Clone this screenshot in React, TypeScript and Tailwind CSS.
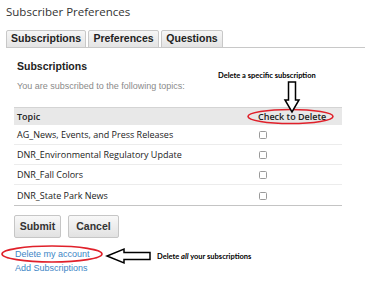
import React from "react";

const topics = [
  "AG_News, Events, and Press Releases",
  "DNR_Environmental Regulatory Update",
  "DNR_Fall Colors",
  "DNR_State Park News",
];

const tabs = [
  { label: "Subscriptions", w: "w-[80px]" },
  { label: "Preferences", w: "w-[71px]" },
  { label: "Questions", w: "w-[62px]" },
];

export default function App() {
  return (
    <div className="relative w-[372px] h-[281px] overflow-hidden bg-white font-['Liberation_Sans',Arial,sans-serif]">
      {/* Page title */}
      <div className="pl-[6px] pt-[3px] h-[30px] text-[11.5px] leading-[18px] text-[#333] font-['Open_Sans',sans-serif]">
        Subscriber Preferences
      </div>

      {/* Tabs */}
      <div className="flex items-end gap-[2px] ml-[6px] mr-[7px] h-[18px] border-b border-[#c8c8c8]">
        {tabs.map((t) => (
          <div
            key={t.label}
            className={`${t.w} h-[18px] -mb-px flex items-center justify-center border border-[#c8c8c8] rounded-t-[2px] bg-gradient-to-b from-[#f6f6f6] to-[#e4e4e4] text-[10.5px] font-bold text-[#222]`}
          >
            {t.label}
          </div>
        ))}
      </div>

      {/* Content */}
      <div className="px-[14px] w-[356px]">
        <div className="pl-[3px] pt-[11px] h-[27px] text-[10.5px] leading-[14px] font-bold text-[#222]">
          Subscriptions
        </div>
        <div className="pl-[3px] h-[32px] pt-[5px] text-[9px] leading-[12px] text-[#8a8a8a]">
          You are subscribed to the following topics:
        </div>

        {/* Table */}
        <div className="border-b border-[#c4c4c4]">
          <div className="flex items-center h-[18px] bg-[#e8e8e8] border-t border-[#d4d4d4] font-['Open_Sans',sans-serif] text-[9px] font-semibold text-[#222]">
            <div className="w-[243px] pl-[3px]">Topic</div>
            <div className="flex-1 pl-[1px]">Check to Delete</div>
          </div>
          {topics.map((t, i) => (
            <div
              key={t}
              className={`flex items-center h-[20px] pt-[1px] font-['Open_Sans',sans-serif] text-[9px] text-[#222] ${
                i < topics.length - 1 ? "border-b border-[#ececec]" : ""
              }`}
            >
              <div className="w-[243px] pl-[3px]">{t}</div>
              <div className="flex-1 pl-[2px]">
                <div className="w-[8px] h-[8px] border border-[#9a9a9a] rounded-[1.5px] bg-white" />
              </div>
            </div>
          ))}
        </div>

        {/* Buttons */}
        <div className="flex gap-[7px] mt-[9px]">
          <button className="w-[47px] h-[23px] border border-[#c6c6c6] rounded-[2px] bg-gradient-to-b from-[#f8f8f8] to-[#e2e2e2] text-[10.5px] font-bold text-[#333]">
            Submit
          </button>
          <button className="w-[51px] h-[23px] border border-[#c6c6c6] rounded-[2px] bg-gradient-to-b from-[#f8f8f8] to-[#e2e2e2] text-[10.5px] font-bold text-[#333]">
            Cancel
          </button>
        </div>

        {/* Links */}
        <div className="mt-[9px] pl-[1px] flex flex-col text-[9px] leading-[14px] text-[#3d86c6]">
          <span>Delete my account</span>
          <span>Add Subscriptions</span>
        </div>
      </div>

      {/* Annotations */}
      <div className="absolute left-[218px] top-[71px] text-[7.5px] leading-[10px] font-bold text-black font-['Lato',sans-serif] whitespace-nowrap">
        Delete a specific subscription
      </div>
      <div className="absolute left-[157px] top-[252px] text-[7.5px] leading-[10px] font-bold text-black font-['Lato',sans-serif] whitespace-nowrap">
        Delete <i>all</i> your subscriptions
      </div>
      <svg className="absolute left-0 top-0" width="372" height="281" viewBox="0 0 372 281">
        <ellipse cx="290.5" cy="116.5" rx="42.5" ry="7" fill="none" stroke="#e0202a" strokeWidth="1.6" />
        <ellipse cx="52" cy="254" rx="50" ry="8" fill="none" stroke="#e0202a" strokeWidth="1.6" />
        <polygon
          points="288.5,82 295.5,82 295.5,100 299,100 292,112 285,100 288.5,100"
          fill="white"
          stroke="black"
          strokeWidth="1.5"
        />
        <polygon
          points="150,252.5 124,252.5 124,249 107,256 124,263 124,259.5 150,259.5"
          fill="white"
          stroke="black"
          strokeWidth="1.5"
        />
      </svg>
    </div>
  );
}
